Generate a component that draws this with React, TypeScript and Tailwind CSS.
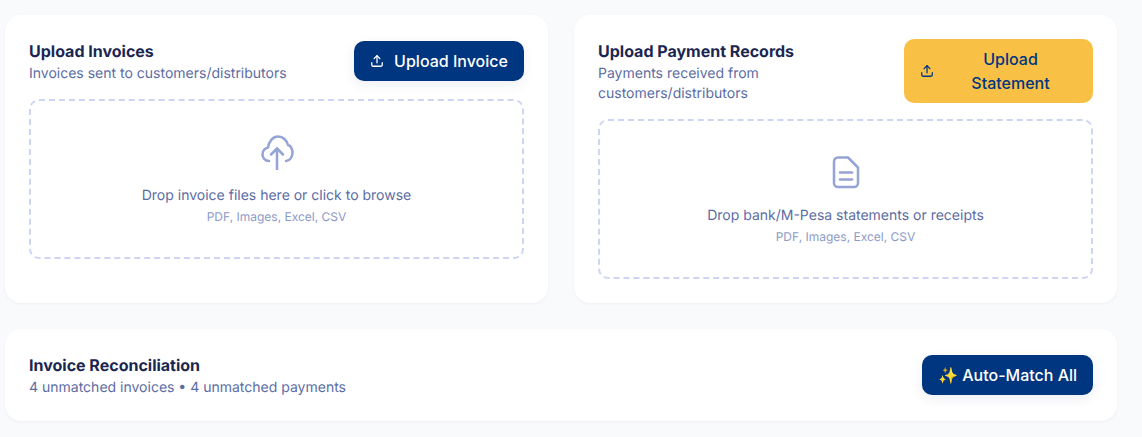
import React from 'react'

function UploadIcon() {
  return (
    <svg width="14" height="14" viewBox="0 0 24 24" fill="none" stroke="currentColor" strokeWidth="2.2" strokeLinecap="round" strokeLinejoin="round" className="shrink-0">
      <path d="M12 15V3" />
      <path d="m7 8 5-5 5 5" />
      <path d="M3 15v4a2 2 0 0 0 2 2h14a2 2 0 0 0 2-2v-4" />
    </svg>
  )
}

function CloudIcon() {
  return (
    <svg width="36" height="36" viewBox="0 0 36 36" fill="none" stroke="currentColor" strokeWidth="2.5" strokeLinecap="round" strokeLinejoin="round">
      <path d="M10 27C5.8 27 3.5 23.5 3.5 20.5C3.5 16.5 6.5 14 9 13.5C10 7 14 2.5 19 2.5C24.5 2.5 28 7 29 11C32 11.5 33.5 15.5 33.5 18.5C33.5 23 31 26.5 27 27" />
      <path d="M18 35.5V14.5" />
      <path d="M12 20.5L18 14.5L24 20.5" />
    </svg>
  )
}

function DocIcon() {
  return (
    <svg width="36" height="36" viewBox="0 0 36 36" fill="none" stroke="currentColor" strokeWidth="2.5" strokeLinecap="round" strokeLinejoin="round">
      <path d="M10 3.5H20L30 13.5V29a4 4 0 0 1-4 4H10a4 4 0 0 1-4-4V7.5a4 4 0 0 1 4-4z" />
      <path d="M12 18.5h12" />
      <path d="M12 25.5h12" />
    </svg>
  )
}

function DropZone({ icon, label }: { icon: React.ReactNode; label: string }) {
  return (
    <div className="h-40 pt-[33px] rounded-[10px] border-2 border-dashed border-[#ccd5f2] flex flex-col items-center">
      <div className="text-[#95a4d4] mb-4">{icon}</div>
      <p className="text-sm leading-5 text-[#5c6ca3]">{label}</p>
      <p className="text-xs leading-4 mt-[3px] text-[#8c9ac6]">PDF, Images, Excel, CSV</p>
    </div>
  )
}

function Heading({ title, sub }: { title: string; sub: string }) {
  return (
    <div className="flex-1 min-w-0">
      <h3 className="text-base leading-6 font-[650] text-[#1a2650]">{title}</h3>
      <p className="text-sm leading-5 mt-px -mb-px text-[#5c6ca3]">{sub}</p>
    </div>
  )
}

export default function App() {
  return (
    <div className="w-[1142px] h-[437px] overflow-hidden bg-[#f9fafc] pl-[5px] pr-[25px] pt-[15px] font-['Inter',sans-serif] [text-rendering:geometricPrecision]">
      <div className="grid grid-cols-2 gap-[26px]">
        <div className="bg-white rounded-2xl p-6 shadow-[0_1px_3px_rgba(26,38,80,0.05)]">
          <div className="flex items-center justify-between gap-4 mb-4">
            <Heading title="Upload Invoices" sub="Invoices sent to customers/distributors" />
            <button className="h-10 w-[170px] rounded-[10px] bg-[#003580] text-white font-[550] text-base flex items-center justify-center gap-2.5 shadow-[0_4px_12px_rgba(0,53,128,0.08)]">
              <UploadIcon />
              Upload Invoice
            </button>
          </div>
          <DropZone icon={<CloudIcon />} label="Drop invoice files here or click to browse" />
        </div>
        <div className="bg-white rounded-2xl p-6 shadow-[0_1px_3px_rgba(26,38,80,0.05)]">
          <div className="flex items-center justify-between gap-4 mb-4">
            <Heading title="Upload Payment Records" sub="Payments received from customers/distributors" />
            <button className="w-[189px] shrink-0 rounded-[10px] bg-[#f8c146] text-[#003580] font-[550] text-base leading-6 py-2 px-4 flex items-center gap-2.5">
              <UploadIcon />
              <span className="flex-1 text-center">Upload Statement</span>
            </button>
          </div>
          <DropZone icon={<DocIcon />} label="Drop bank/M-Pesa statements or receipts" />
        </div>
      </div>
      <div className="mt-[26px] h-[92px] bg-white rounded-2xl px-6 flex items-center justify-between shadow-[0_1px_3px_rgba(26,38,80,0.05)]">
        <Heading title="Invoice Reconciliation" sub="4 unmatched invoices • 4 unmatched payments" />
        <button className="h-10 w-[171px] rounded-[10px] bg-[#003580] text-white font-[550] text-base flex items-center justify-center shadow-[0_4px_12px_rgba(0,53,128,0.08)]">
          ✨ Auto-Match All
        </button>
      </div>
    </div>
  )
}
